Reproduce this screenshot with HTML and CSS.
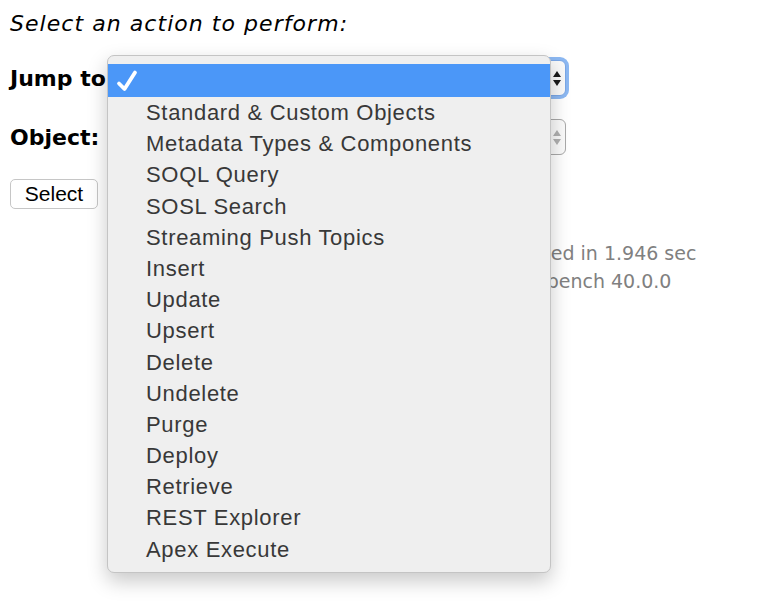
FILE: index.html
```html
<!DOCTYPE html>
<html>
<head>
<meta charset="utf-8">
<link rel="stylesheet" href="styles.css">
</head>
<body>
<div class="page">
  <p class="title">Select an action to perform:</p>
  <div class="form">
    <div class="row">
      <span class="label">Jump to:</span>
      <div class="select focused"><span class="arrows dark"><i class="up"></i><i class="down"></i></span></div>
    </div>
    <div class="row">
      <span class="label">Object:</span>
      <div class="select"><span class="arrows"><i class="up"></i><i class="down"></i></span></div>
    </div>
  </div>
  <button class="btn">Select</button>
  <div class="footer">
    <div>Requested in 1.946 sec</div>
    <div>Workbench 40.0.0</div>
  </div>
</div>
<div class="menu">
  <div class="item selected"><svg class="check" width="26" height="26" viewBox="0 0 26 26"><path d="M4 15.5 L9.5 21 L20 4.5" fill="none" stroke="#fff" stroke-width="3.8" stroke-linecap="round" stroke-linejoin="round"/></svg></div>
  <div class="item">Standard &amp; Custom Objects</div>
  <div class="item">Metadata Types &amp; Components</div>
  <div class="item">SOQL Query</div>
  <div class="item">SOSL Search</div>
  <div class="item">Streaming Push Topics</div>
  <div class="item">Insert</div>
  <div class="item">Update</div>
  <div class="item">Upsert</div>
  <div class="item">Delete</div>
  <div class="item">Undelete</div>
  <div class="item">Purge</div>
  <div class="item">Deploy</div>
  <div class="item">Retrieve</div>
  <div class="item">REST Explorer</div>
  <div class="item">Apex Execute</div>
</div>
</body>
</html>
```
FILE: styles.css
```css
html, body {
  margin: 0;
  padding: 0;
  background: #fff;
}
body {
  font-family: "DejaVu Sans", Verdana, sans-serif;
  color: #000;
  width: 768px;
  height: 602px;
  overflow: hidden;
  position: relative;
}
.page {
  padding: 10px 0 0 10px;
}
.title {
  margin: 0;
  font-style: italic;
  font-size: 22px;
  letter-spacing: 1.05px;
  line-height: 28px;
}
.form {
  margin-top: 22px;
  display: flex;
  flex-direction: column;
  gap: 23px;
}
.row {
  display: flex;
  align-items: center;
  height: 36px;
}
.label {
  font-weight: bold;
  font-size: 22px;
  width: 100px;
  white-space: nowrap;
}
.select {
  width: 454px;
  height: 34px;
  border: 1px solid #a9a9a9;
  border-radius: 6px;
  background: #fafafa;
  display: flex;
  justify-content: flex-end;
  align-items: center;
  box-sizing: content-box;
}
.select.focused {
  box-shadow: 0 0 0 3px #8cb8f2;
  border-color: #7aa7e6;
}
.arrows {
  display: flex;
  flex-direction: column;
  gap: 3px;
  margin-right: 3px;
  width: 10px;
  align-items: center;
}
.arrows i {
  display: block;
  width: 0;
  height: 0;
  border-left: 4px solid transparent;
  border-right: 4px solid transparent;
}
.arrows .up { border-bottom: 6px solid #b0b0b0; }
.arrows .down { border-top: 6px solid #b0b0b0; }
.arrows.dark .up { border-bottom-color: #1a1a1a; }
.arrows.dark .down { border-top-color: #1a1a1a; }
.btn {
  margin-top: 24px;
  width: 88px;
  height: 30px;
  border: 1px solid #c6c6c6;
  border-radius: 5px;
  background: #fff;
  font-family: "Liberation Sans", Arial, sans-serif;
  font-size: 21px;
  color: #000;
  padding: 0;
  display: block;
}
.footer {
  margin-top: 30px;
  margin-left: 392px;
  width: 366px;
  text-align: center;
  color: #808080;
  font-size: 19px;
  line-height: 28px;
}
.menu {
  position: absolute;
  left: 107px;
  top: 55px;
  width: 444px;
  height: 518px;
  box-sizing: border-box;
  padding-top: 8px;
  background: #efefef;
  border: 1px solid #c4c4c4;
  border-radius: 7px;
  box-shadow: 0 8px 20px rgba(0, 0, 0, 0.22);
  font-family: "Liberation Sans", Arial, sans-serif;
  font-size: 22px;
  letter-spacing: 0.68px;
  color: #383838;
}
.item {
  height: 31.2px;
  line-height: 31.2px;
  padding-left: 38px;
  white-space: nowrap;
}
.item.selected {
  height: 33px;
  background: #4b97f8;
  padding-left: 7px;
  display: flex;
  align-items: center;
}
.check {
  display: block;
}
```
